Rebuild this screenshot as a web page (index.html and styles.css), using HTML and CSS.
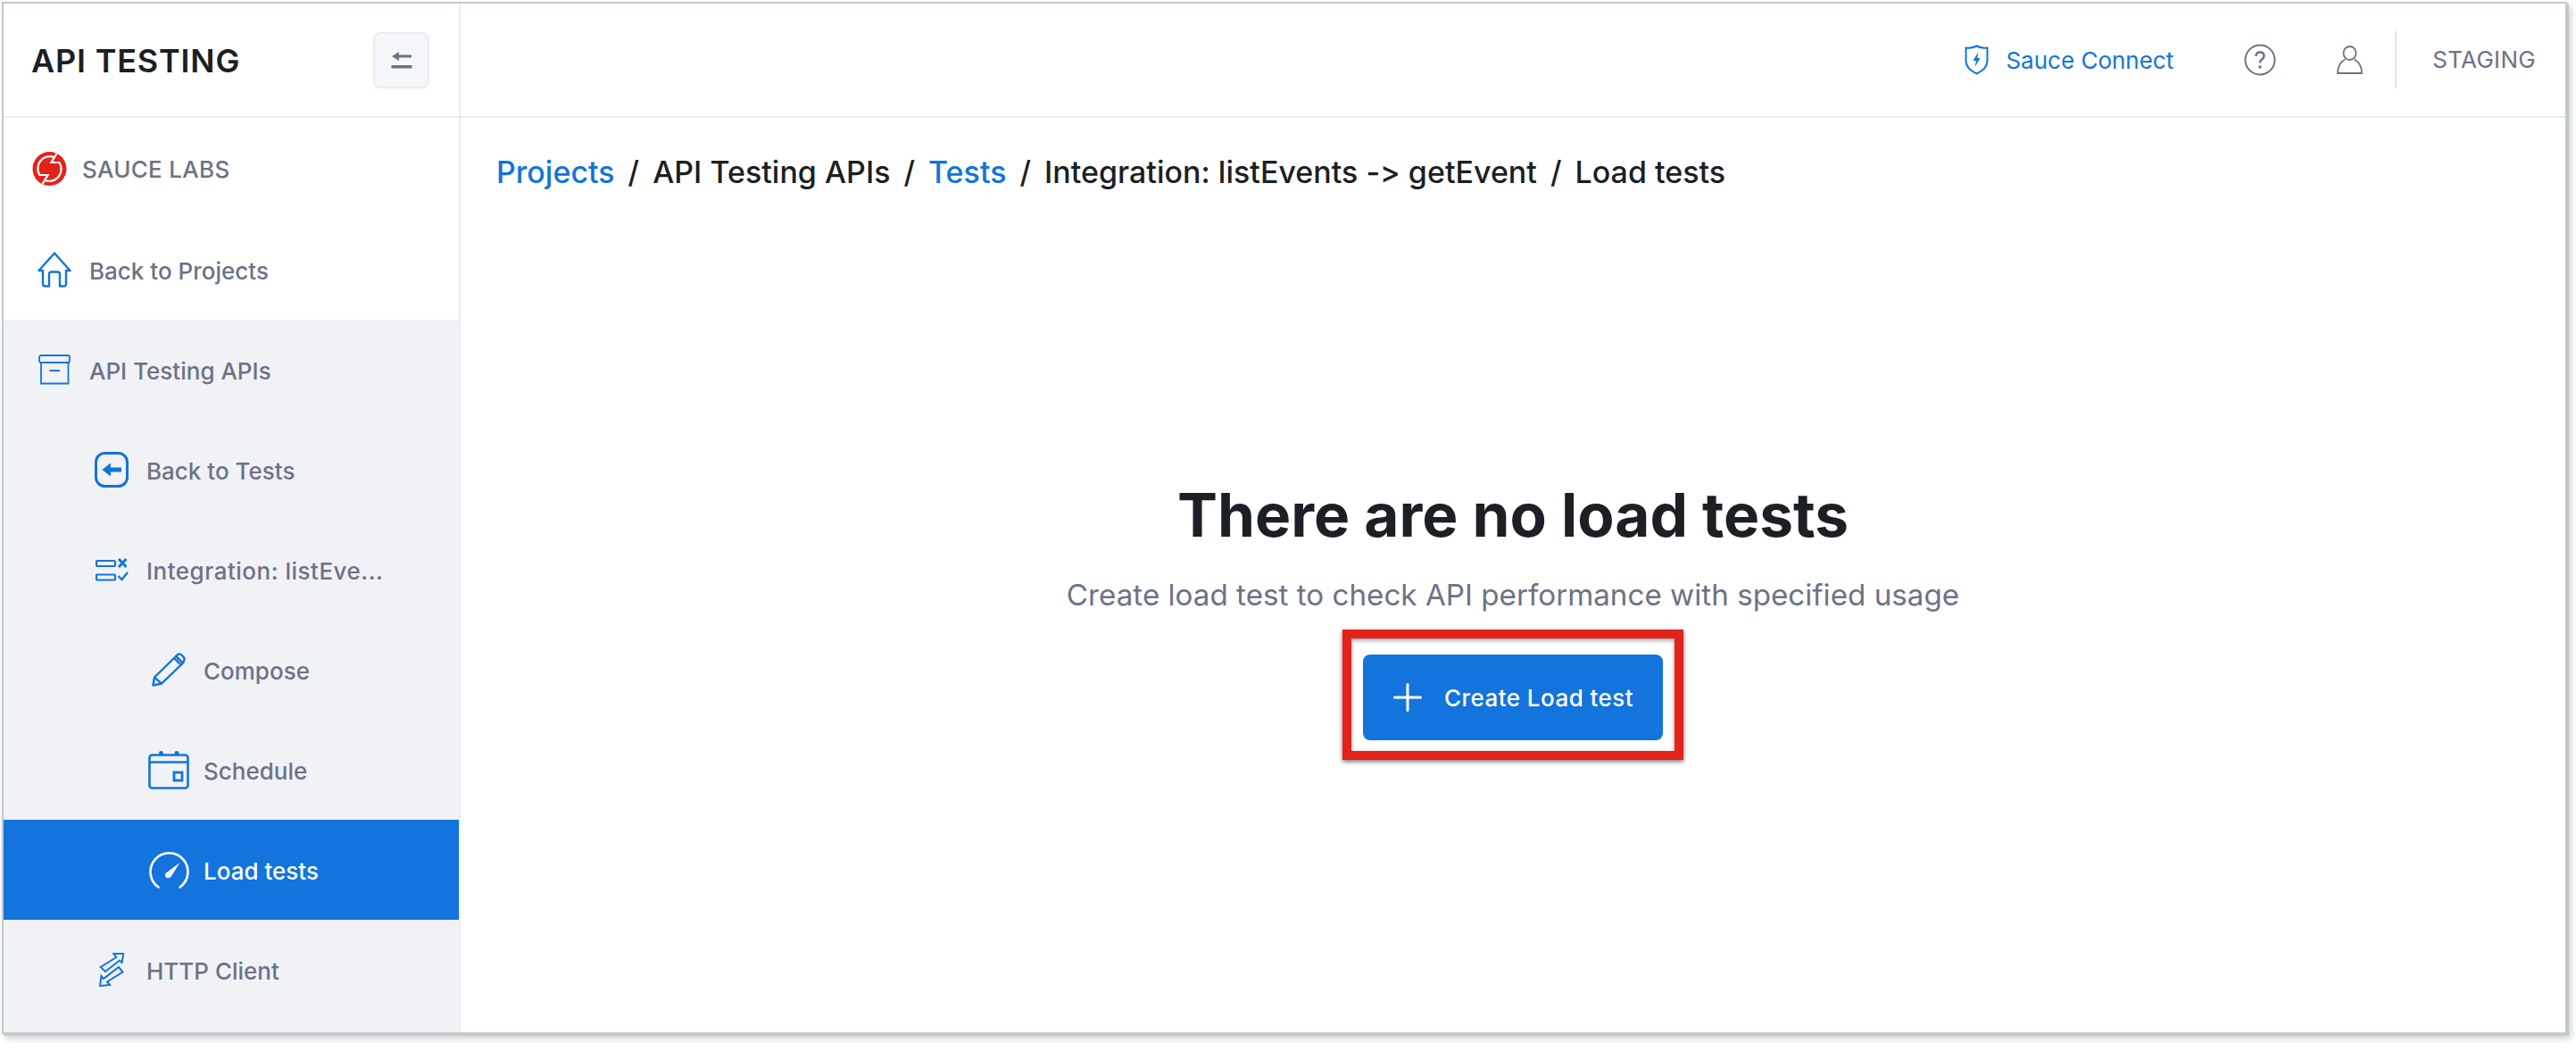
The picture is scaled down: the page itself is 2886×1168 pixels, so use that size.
FILE: index.html
```html
<!DOCTYPE html>
<html lang="en">
<head>
    <meta charset="UTF-8">
    <meta name="viewport" content="width=device-width, initial-scale=1.0">
    <title>API Testing</title>
    <link rel="stylesheet" href="styles.css">
</head>
<body>
    <div class="window">
        <aside class="sidebar">
            <div class="brand">
                <span class="brand-name">API TESTING</span>
                <button class="collapse" aria-label="Collapse">
                    <svg width="24" height="24" viewBox="0 0 24 24"><path d="M1 8 L9 3 V6.5 H23 V9.5 H9 V13 Z" fill="#6b7385"/><rect x="0.5" y="18" width="23" height="3.5" fill="#6b7385"/></svg>
                </button>
            </div>
            <nav class="nav">
                <div class="org">
                    <svg class="org-logo" width="39" height="38" viewBox="0 0 38 38"><circle cx="19" cy="19" r="19" fill="#e2231a"/><path d="M24 6 A13.5 13.5 0 0 0 8 26 H17 L11 36 M14 32 A13.5 13.5 0 0 0 30 12 H21 L27 2" fill="none" stroke="#fff" stroke-width="2.2"/></svg>
                    <span>SAUCE LABS</span>
                </div>
                <a class="item">
                    <span class="icon"><svg width="40" height="40" viewBox="0 0 38 40" fill="none" stroke="#1274dc" stroke-width="2.4" stroke-linejoin="round"><path d="M1.5 21 L19 1.5 L36.5 21 H32 V36 Q32 38.5 29.5 38.5 H25 V25 Q25 22.5 22.5 22.5 H15.5 Q13 22.5 13 25 V38.5 H8.5 Q6 38.5 6 36 V21 Z"/></svg></span>
                    <span class="label">Back to Projects</span>
                </a>
                <div class="group">
                    <a class="item">
                        <span class="icon"><svg width="38" height="34" viewBox="0 0 36 34" fill="none" stroke="#1274dc" stroke-width="1.8"><rect x="1" y="1" width="34" height="8" rx="2"/><path d="M3 9 V32.5 H33.5 V9"/><path d="M12.5 18 H24" stroke-width="2"/></svg></span>
                        <span class="label">API Testing APIs</span>
                    </a>
                    <a class="item level-2">
                        <span class="icon"><svg width="40" height="40" viewBox="0 0 38 40"><rect x="1.5" y="1.5" width="35" height="37" rx="10" fill="none" stroke="#1274dc" stroke-width="3"/><path d="M8.5 20 L18 12.5 V17.5 H30 V22.5 H18 V27.5 Z" fill="#1274dc"/></svg></span>
                        <span class="label">Back to Tests</span>
                    </a>
                    <a class="item level-2">
                        <span class="icon"><svg width="37" height="26" viewBox="0 0 37 26" fill="none" stroke="#1274dc" stroke-width="2.2"><rect x="1" y="3" width="21" height="6" rx="1"/><rect x="1" y="18.5" width="21" height="6" rx="1"/><path d="M26 1 L34.5 10 M34.5 1 L26 10" stroke-width="3"/><path d="M25.5 20 L29.5 24 L36 16" stroke-width="2.4"/></svg></span>
                        <span class="label label-wide">Integration: listEve...</span>
                    </a>
                    <a class="item level-3">
                        <span class="icon"><svg width="38" height="38" viewBox="0 0 38 38" fill="none" stroke="#1274dc" stroke-width="2.4" stroke-linejoin="round"><path d="M1.5 36.5 L3 27.5 L27 4 L35 11.5 L11 34.5 Z"/><path d="M25 6 L33 14 M3 27.5 L11 34.5"/><path d="M27 4 L30 1.5 Q32 1 34 3 L36.5 6 Q37 8 35 11.5"/></svg></span>
                        <span class="label">Compose</span>
                    </a>
                    <a class="item level-3">
                        <span class="icon"><svg width="48" height="44" viewBox="0 0 46 44" fill="none" stroke="#1274dc" stroke-width="2.6"><rect x="1.5" y="5.5" width="43" height="37" rx="3"/><path d="M1.5 13.5 H44.5"/><rect x="29" y="25" width="9" height="9" stroke-width="2.8"/><circle cx="14.5" cy="3.5" r="2.5" fill="#1274dc" stroke="none"/><circle cx="32" cy="3.5" r="2.5" fill="#1274dc" stroke="none"/></svg></span>
                        <span class="label">Schedule</span>
                    </a>
                    <a class="item level-3 active">
                        <span class="icon"><svg width="47" height="44" viewBox="0 0 46 44" fill="none" stroke="#fff" stroke-width="2.6"><path d="M11 41.5 A21 21 0 1 1 35 41.5" stroke-linecap="round"/><path d="M19 26 L35 14 L25 30 Q21 32.5 19 30 Q18 28 19 26 Z" fill="#fff" stroke="none"/></svg></span>
                        <span class="label">Load tests</span>
                    </a>
                    <a class="item level-2">
                        <span class="icon"><svg width="28" height="38" viewBox="0 0 28 38" fill="none" stroke="#1274dc" stroke-width="2"><path d="M1.7 16 L19.3 5 L16.3 1 L27.5 0.8 L25.5 11 L23 8.5 L7 21 Z"/><path d="M22 16 L26.5 21.5 L9 32.5 L12 36 L1 37 L2.5 26 L5 29 Z"/></svg></span>
                        <span class="label">HTTP Client</span>
                    </a>
                </div>
            </nav>
        </aside>
        <div class="content">
            <header class="topbar">
                <a class="connect">
                    <svg width="27" height="34" viewBox="0 0 27 34" fill="none" stroke="#1274dc" stroke-width="2"><path d="M13.5 1.5 Q19 4.5 25.5 3.5 V18 Q25.5 27 13.5 32.5 Q1.5 27 1.5 18 V3.5 Q8 4.5 13.5 1.5 Z"/><path d="M15.5 8 L9.5 18 H13 L11.5 25 L17.5 15 H14 Z" fill="#1274dc" stroke="none"/></svg>
                    <span>Sauce Connect</span>
                </a>
                <span class="help"><svg width="36" height="36" viewBox="0 0 36 36" fill="none" stroke="#6b7385" stroke-width="2"><circle cx="18" cy="18" r="16.5"/><path d="M13.5 14 Q13.5 9.5 18 9.5 Q22.5 9.5 22.5 13.5 Q22.5 16 19.5 18 Q18 19 18 21.5" stroke-width="2.4"/><circle cx="18" cy="26" r="1.7" fill="#6b7385" stroke="none"/></svg></span>
                <span class="user"><svg width="29" height="32" viewBox="0 0 29 32" fill="none" stroke="#6b7385" stroke-width="1.8"><ellipse cx="14.5" cy="8.5" rx="7" ry="7.5"/><path d="M9.5 15.5 Q1 20 1 31 H28 Q28 20 19.5 15.5"/></svg></span>
                <span class="env">STAGING</span>
            </header>
            <main class="main">
                <div class="breadcrumb">
                    <a class="crumb-link">Projects</a><span class="sep">/</span><span>API Testing APIs</span><span class="sep">/</span><a class="crumb-link">Tests</a><span class="sep">/</span><span>Integration: listEvents -&gt; getEvent</span><span class="sep">/</span><span>Load tests</span>
                </div>
                <section class="empty">
                    <h1>There are no load tests</h1>
                    <p>Create load test to check API performance with specified usage</p>
                    <div class="callout">
                        <button class="create">
                            <svg width="32" height="32" viewBox="0 0 32 32" stroke="#fff" stroke-width="3" stroke-linecap="round"><path d="M16 1.5 V30.5 M1.5 16 H30.5"/></svg>
                            <span>Create Load test</span>
                        </button>
                    </div>
                </section>
            </main>
        </div>
    </div>
</body>
</html>
```

FILE: styles.css
```css
html, body {
    margin: 0;
    height: 100%;
    background-color: #fff;
}
body {
    font-family: Inter, "Open Sans", sans-serif;
    font-variant-ligatures: none;
    font-feature-settings: "calt" 0;
    overflow: hidden;
}
.window {
    display: flex;
    width: 2874px;
    height: 1156px;
    margin: 2px 0 0 2px;
    box-sizing: border-box;
    border: 2px solid #c3c9c9;
    box-shadow: 2px 2px 0 #c3c9c9, 4px 5px 7px rgba(150,160,160,0.5);
    background-color: #fff;
}
.sidebar {
    display: flex;
    flex-direction: column;
    width: 510px;
    flex-shrink: 0;
    border-right: 2px solid #e8ecf0;
}
.brand {
    display: flex;
    align-items: center;
    justify-content: space-between;
    height: 126px;
    padding: 0 33px 0 31px;
    border-bottom: 2px solid #e8ecf0;
}
.brand-name {
    padding-top: 2px;
    font-size: 36px;
    font-weight: 600;
    letter-spacing: 0.8px;
    color: #1c1f24;
}
.collapse {
    display: flex;
    align-items: center;
    justify-content: center;
    width: 63px;
    height: 63px;
    padding: 0;
    background-color: #f5f6f9;
    border: 2px solid #e8ecf0;
    border-radius: 8px;
}
.nav {
    display: flex;
    flex-direction: column;
    flex: 1;
}
.org {
    display: flex;
    align-items: center;
    gap: 17px;
    height: 114px;
    padding-left: 32px;
    font-size: 26px;
    font-weight: 500;
    letter-spacing: 0.3px;
    color: #6b7385;
}
.item {
    display: flex;
    align-items: center;
    gap: 15px;
    height: 112px;
    padding-left: 33px;
    font-size: 26px;
    font-weight: 500;
    color: #6b7385;
}
.label {
    padding-top: 2px;
}
.label-wide {
    letter-spacing: 0.5px;
}
.icon {
    display: flex;
    justify-content: center;
    width: 48px;
    flex-shrink: 0;
}
.group {
    flex: 1;
    background-color: #f0f2f6;
}
.level-2 {
    padding-left: 97px;
}
.level-3 {
    padding-left: 161px;
}
.active {
    background-color: #1274dc;
    color: #fff;
}
.content {
    display: flex;
    flex-direction: column;
    flex: 1;
}
.topbar {
    display: flex;
    align-items: center;
    justify-content: flex-end;
    height: 126px;
    padding-right: 33px;
    border-bottom: 2px solid #e8ecf0;
    color: #6b7385;
    font-size: 26px;
}
.connect {
    display: flex;
    align-items: center;
    gap: 19px;
    color: #1274dc;
    margin-right: 79px;
}
.help {
    display: flex;
    margin-right: 68px;
}
.user {
    display: flex;
    margin-right: 36px;
}
.env {
    padding-left: 40px;
    line-height: 64px;
    letter-spacing: 0.3px;
    border-left: 2px solid #dfe3e8;
}
.main {
    display: flex;
    flex-direction: column;
    flex: 1;
}
.breadcrumb {
    display: flex;
    padding: 39px 0 0 40px;
    font-size: 34px;
    font-weight: 500;
    line-height: 44px;
    color: #1c1f24;
}
.crumb-link {
    color: #1274dc;
}
.sep {
    margin: 0 15px;
}
.empty {
    display: flex;
    flex-direction: column;
    align-items: center;
    padding-top: 320px;
}
.empty h1 {
    margin: 0;
    font-size: 67.5px;
    font-weight: 700;
    line-height: 84px;
    color: #1c1f24;
}
.empty p {
    margin: 25px 0 0;
    font-size: 33.2px;
    line-height: 44px;
    color: #6b7385;
}
.callout {
    display: flex;
    margin-top: 17px;
    padding: 18px 13px 12px;
    border: 10px solid #e2231a;
    box-shadow: 0 2px 5px rgba(0,0,0,0.55), inset 0 2px 5px rgba(0,0,0,0.4);
}
.create {
    display: flex;
    align-items: center;
    gap: 25px;
    width: 336px;
    height: 96px;
    padding: 0 0 0 34px;
    background-color: #1274dc;
    border: none;
    border-radius: 8px;
    color: #fff;
    font-family: inherit;
    font-size: 26px;
    font-weight: 500;
    letter-spacing: 0.45px;
    white-space: nowrap;
}
```
